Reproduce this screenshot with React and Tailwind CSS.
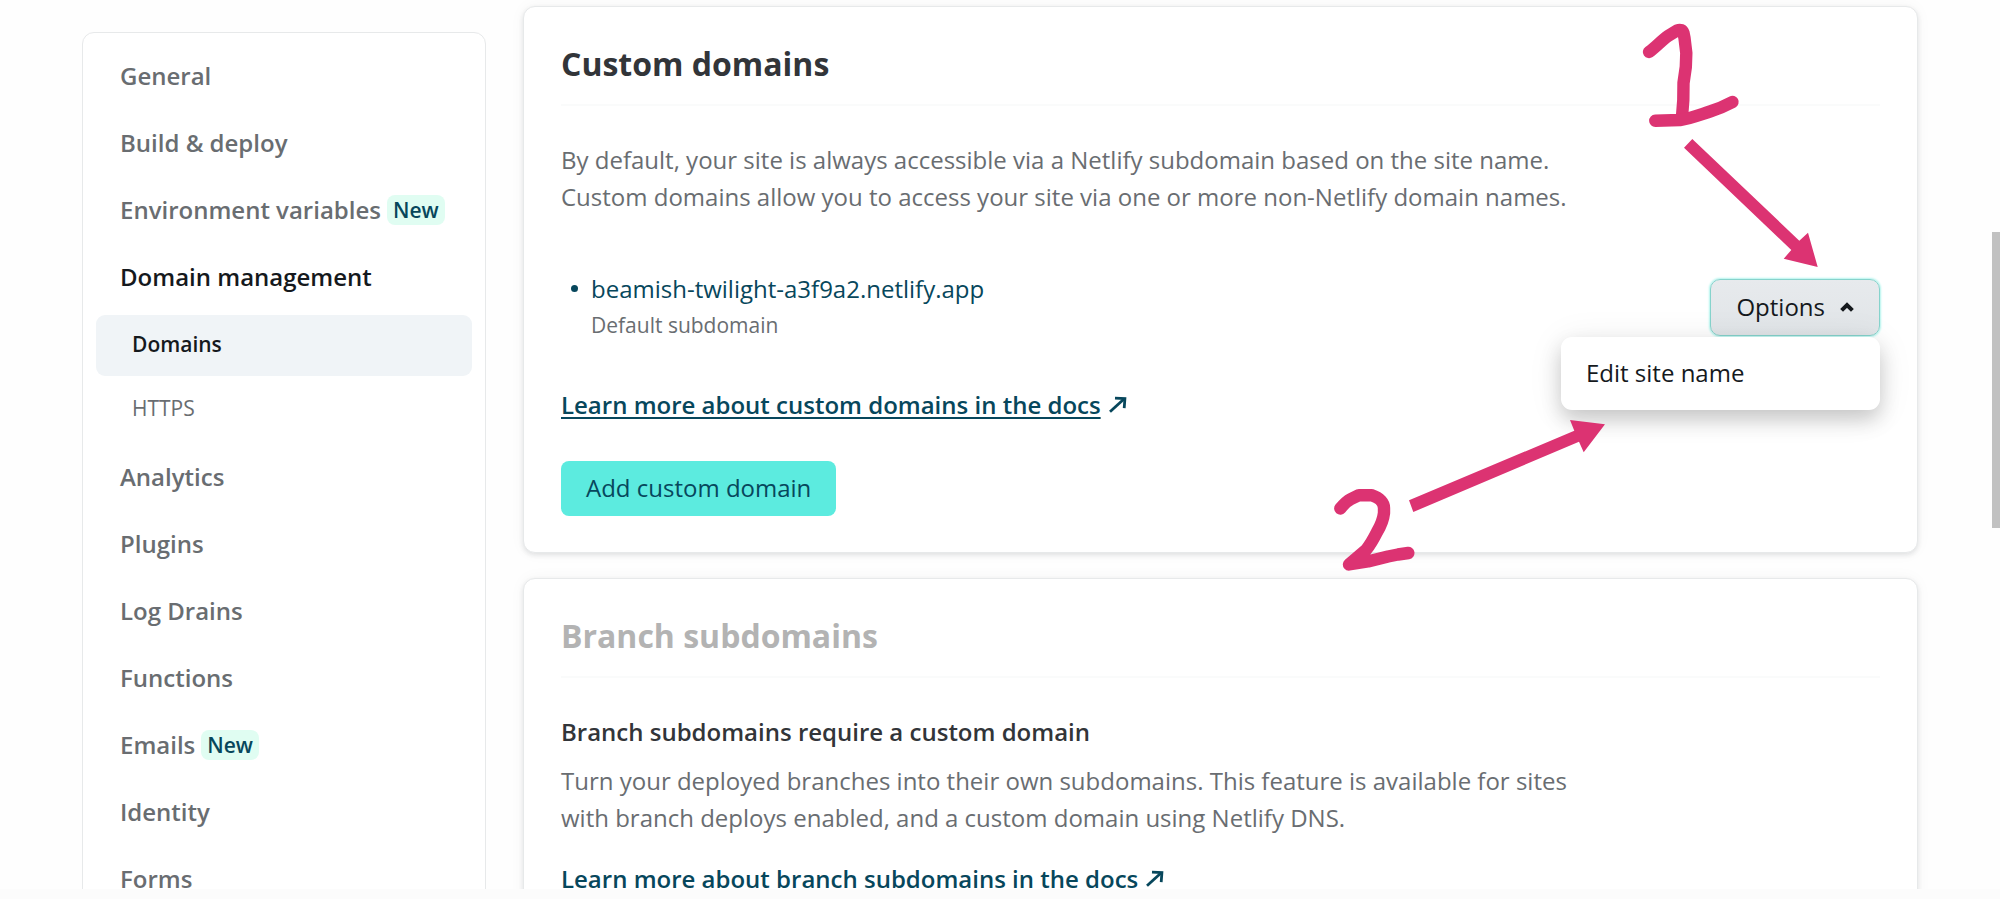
const navTop = [
  { label: "General" },
  { label: "Build & deploy" },
  { label: "Environment variables", isNew: true },
  { label: "Domain management", active: true },
];

const navBottom = [
  { label: "Analytics" },
  { label: "Plugins" },
  { label: "Log Drains" },
  { label: "Functions" },
  { label: "Emails", isNew: true },
  { label: "Identity" },
  { label: "Forms" },
];

function NavItem({ label, isNew, active }) {
  return (
    <li>
      <a
        href="#"
        className={
          "flex h-[67px] items-center gap-[6px] px-6 text-2xl font-semibold " +
          (active ? "text-[#15191d]" : "text-[#696d71]")
        }
      >
        <span>{label}</span>
        {isNew && (
          <span className="rounded-lg bg-[#e0fdf2] px-[6px] text-[21px] leading-[30px] text-[#07475c]">New</span>
        )}
      </a>
    </li>
  );
}

function Sidebar() {
  return (
    <nav
      aria-label="Site settings"
      className="mt-8 w-[404px] shrink-0 self-start rounded-xl border border-[#e7e9ea] bg-white px-[13px] pt-[9px] pb-8"
    >
      <ul>
        {navTop.map((item) => (
          <NavItem key={item.label} {...item} />
        ))}
        <li>
          <ul className="mt-[5px] mb-[3px] flex flex-col gap-[3px] text-[21px]">
            <li>
              <a
                href="#"
                aria-current="page"
                className="flex h-[61px] items-center rounded-[9px] bg-[#f0f4f7] px-9 pb-[2px] font-semibold text-[#15191d]"
              >
                Domains
              </a>
            </li>
            <li>
              <a href="#" className="flex h-[61px] items-center px-9 pb-[2px] text-[#696d71]">
                HTTPS
              </a>
            </li>
          </ul>
        </li>
        {navBottom.map((item) => (
          <NavItem key={item.label} {...item} />
        ))}
      </ul>
    </nav>
  );
}

function Card({ title, titleClass, children }) {
  return (
    <section className="relative rounded-xl border border-[#e7e9ea] bg-white px-[37px] pt-[35px] pb-9 shadow-[0_2px_5px_rgba(14,30,37,0.11),0_0_16px_rgba(14,30,37,0.04)]">
      <h2 className={"border-b-2 border-[#fafbfb] pb-[18px] text-[32px] leading-[44px] font-bold " + titleClass}>
        {title}
      </h2>
      <div className="pt-[35px]">{children}</div>
    </section>
  );
}

function DocsLink({ children, className }) {
  return (
    <p className={className}>
      <a href="#" className="inline-flex items-center gap-2 font-semibold text-[#07475c]">
        <span className="underline decoration-2 underline-offset-[3px]">{children}</span>
        <svg viewBox="0 0 18 17" className="h-[17px] w-[18px]" fill="none" stroke="currentColor" strokeWidth="2.8" aria-hidden="true">
          <path d="M1 15.8 15 3" />
          <path d="M6 2.200 15.900 2.600 15.200 12.200" />
        </svg>
      </a>
    </p>
  );
}

function Annotations() {
  return (
    <svg
      viewBox="1297 7 620 560"
      className="pointer-events-none absolute top-0 right-0 z-20 h-[560px] w-[620px] overflow-visible"
      aria-hidden="true"
    >
      <g fill="none" stroke="#dc3372" strokeWidth="12.4" strokeLinecap="round" strokeLinejoin="round">
        <path d="M1649 52 C1656 47 1661 41 1668 36 L1677 30.5 Q1682 28.5 1683.5 33 L1684.5 38 L1686.3 53 L1685.8 67 L1683.5 83 L1683.3 100 L1682 117" />
        <path d="M1655.3 120.7 L1680 120 C1690 118.5 1699 115 1710 111.5 C1718 109 1725 106 1732.5 102" />
        <path d="M1340.3 508.5 C1344 504 1347 501 1351 499 L1359 495.2 H1371.5 C1380 498 1384 503 1384 508 V513 C1383 522 1380 527 1377 532 C1373 540 1370 545 1366 550 L1349 564.5 L1368 561.5 L1388 556.5 L1398 554.5 L1408.3 553" />
      </g>
      <g fill="#dc3372">
        <path d="M1692.3 139 1799.3 240.7 1808 232.7 1817.7 267 1783.7 258.7 1791.3 250 1684 147.7Z" />
        <path d="M1409 500.3 1574.3 430.7 1570 420 1605 424.3 1583.7 452.3 1579 441.7 1413.3 512Z" />
      </g>
    </svg>
  );
}

function OptionsMenu() {
  return (
    <div className="relative mb-2 self-end">
      <button
        type="button"
        aria-haspopup="menu"
        aria-expanded="true"
        className="flex h-[57px] items-center gap-[15px] rounded-[10px] border border-[#86d3cc] bg-linear-to-b from-[#e7eaed] to-[#e1e5e8] px-[25px] pb-[2px] text-[#15191d] shadow-[0_0_2px_1px_#b4f5ee]"
      >
        Options
        <svg viewBox="0 0 14 10" className="h-[10px] w-[14px]" fill="none" stroke="currentColor" strokeWidth="4" aria-hidden="true">
          <path d="M1.6 8.4 7 3 12.4 8.4" />
        </svg>
      </button>
      <div
        role="menu"
        className="absolute top-full right-0 z-10 mt-px w-[319px] rounded-[11px] bg-white shadow-[0_10px_20px_rgba(0,0,0,0.18),0_4px_36px_rgba(0,0,0,0.08)]"
      >
        <button type="button" role="menuitem" className="block h-[73px] w-full px-[25px] pb-[2px] text-left text-[#15191d]">
          Edit site name
        </button>
      </div>
    </div>
  );
}

export default function App() {
  return (
    <div className="relative flex h-screen flex-col overflow-hidden bg-[#fefefe] font-['Open_Sans',sans-serif]">
      <div className="flex min-h-0 flex-1 gap-[37px] overflow-hidden px-[82px]">
        <Sidebar />
        <main className="mt-[6px] flex min-w-0 flex-1 flex-col gap-[25px] self-start text-2xl leading-[37px] text-[#696d71]">
          <Card title="Custom domains" titleClass="text-[#323539]">
            <p className="max-w-[1020px]">
              By default, your site is always accessible via a Netlify subdomain based on the site name. Custom
              domains allow you to access your site via one or more non-Netlify domain names.
            </p>
            <ul className="mt-[55px]">
              <li className="flex justify-between">
                <div className="flex gap-[13px] pl-[10px]">
                  <span className="mt-[15px] size-[7px] rounded-full bg-[#07475c]" />
                  <div>
                    <a href="#" className="block text-[#07475c]">
                      beamish-twilight-a3f9a2.netlify.app
                    </a>
                    <p className="text-[21px]">Default subdomain</p>
                  </div>
                </div>
                <OptionsMenu />
              </li>
            </ul>
            <DocsLink className="mt-[42px]">Learn more about custom domains in the docs</DocsLink>
            <button type="button" className="mt-[38px] block h-[55px] rounded-lg bg-[#5cebdf] px-[25px] pb-[2px] text-[#07475c]">
              Add custom domain
            </button>
            <Annotations />
          </Card>
          <Card title="Branch subdomains" titleClass="text-[#b3b3b3]">
            <h3 className="font-semibold text-[#323539]">Branch subdomains require a custom domain</h3>
            <p className="mt-3 max-w-[1020px]">
              Turn your deployed branches into their own subdomains. This feature is available for sites with branch
              deploys enabled, and a custom domain using Netlify DNS.
            </p>
            <DocsLink className="mt-6">Learn more about branch subdomains in the docs</DocsLink>
          </Card>
        </main>
      </div>
      <div className="h-[10px] shrink-0 bg-[#fcfcfc]" />
      <div className="absolute top-[232px] right-0 h-[296px] w-2 bg-[#c1c1c1]" />
    </div>
  );
}
